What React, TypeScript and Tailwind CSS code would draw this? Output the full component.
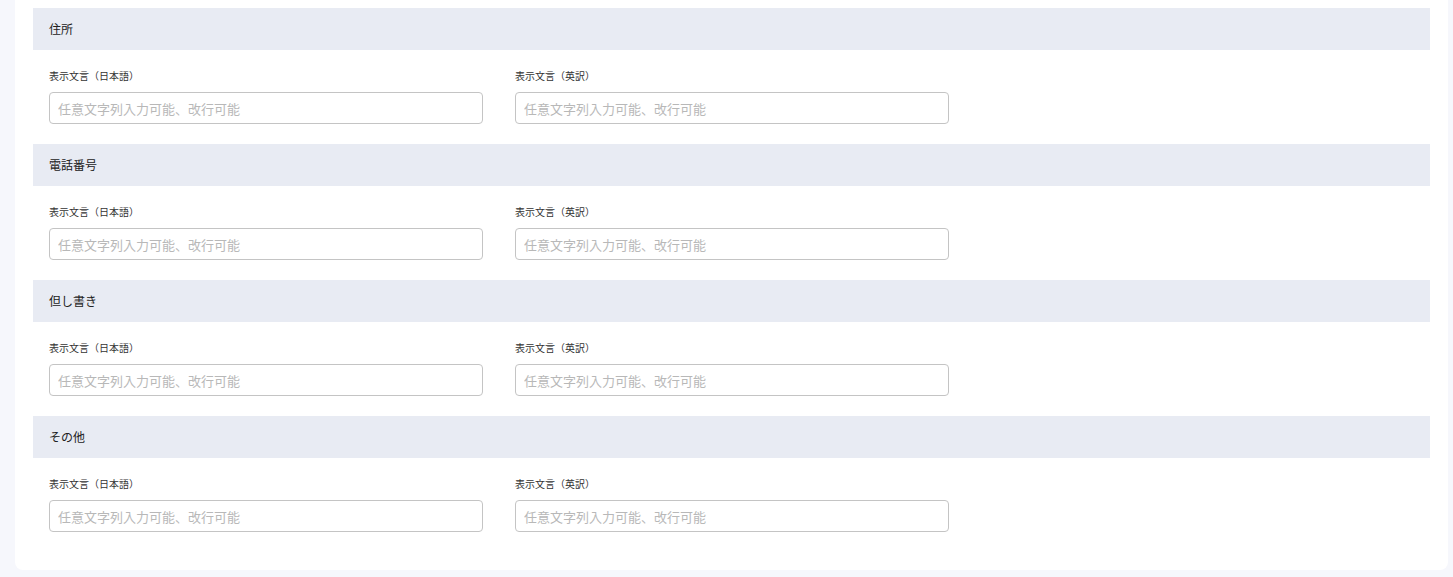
import React from 'react';

const sections = ['住所', '電話番号', '但し書き', 'その他'];

const font = { fontFamily: '"Noto Sans CJK JP", "Noto Sans", sans-serif' };

function Field({ label }: { label: string }) {
  return (
    <div className="w-[434px]">
      <label className="block text-[10px] leading-[16px] text-[#333] mb-2">{label}</label>
      <input
        type="text"
        placeholder="任意文字列入力可能、改行可能"
        className="w-full h-8 px-2 text-[13px] border border-[#c4c4c4] rounded-[4px] bg-white placeholder:text-[#b8b8b8] outline-none"
      />
    </div>
  );
}

export default function App() {
  return (
    <div className="min-h-[577px] bg-[#f6f7fc] pl-[15px] pr-[5px] pb-[7px]" style={font}>
      <div className="bg-white rounded-b-lg px-[18px] pt-2 pb-[18px]">
        {sections.map((title) => (
          <div key={title} className="pb-5">
            {/* Section header */}
            <div className="h-[42px] bg-[#e8ebf3] flex items-center px-4">
              <h2 className="text-[12px] text-[#222]">{title}</h2>
            </div>
            <div className="flex gap-8 px-4 pt-[18px]">
              <Field label="表示文言（日本語）" />
              <Field label="表示文言（英訳）" />
            </div>
          </div>
        ))}
      </div>
    </div>
  );
}
